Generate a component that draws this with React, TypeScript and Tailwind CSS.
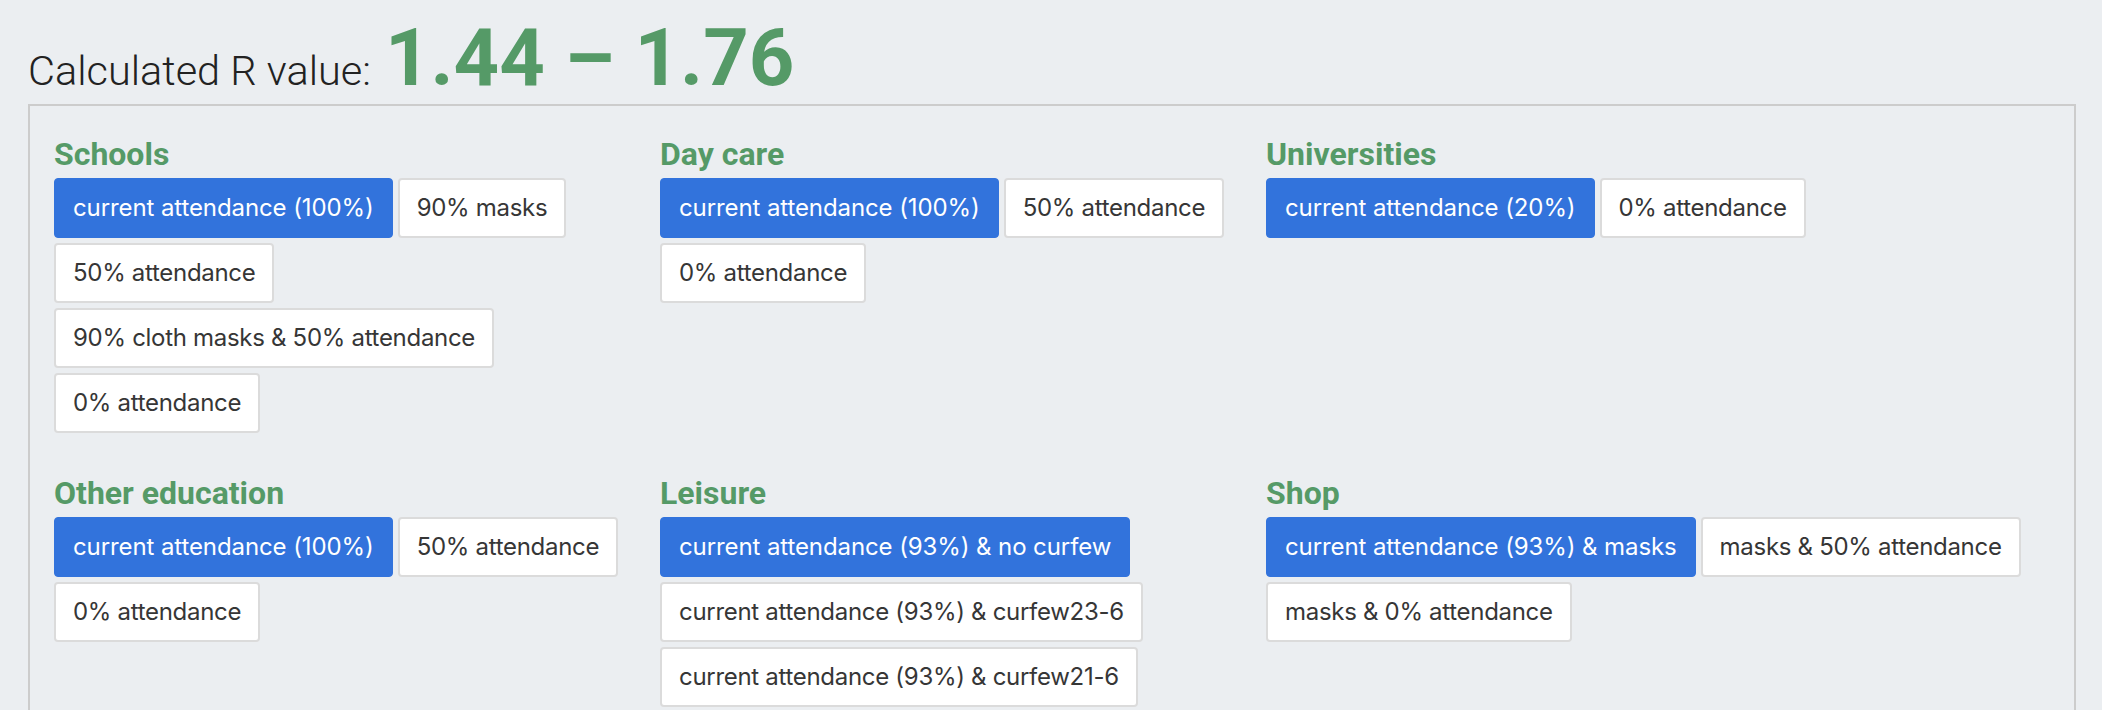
import React from "react";

type Section = { title: string; options: string[]; active: number };

const sections: Section[] = [
  {
    title: "Schools",
    options: [
      "current attendance (100%)",
      "90% masks",
      "50% attendance",
      "90% cloth masks & 50% attendance",
      "0% attendance",
    ],
    active: 0,
  },
  {
    title: "Day care",
    options: ["current attendance (100%)", "50% attendance", "0% attendance"],
    active: 0,
  },
  {
    title: "Universities",
    options: ["current attendance (20%)", "0% attendance"],
    active: 0,
  },
  {
    title: "Other education",
    options: ["current attendance (100%)", "50% attendance", "0% attendance"],
    active: 0,
  },
  {
    title: "Leisure",
    options: [
      "current attendance (93%) & no curfew",
      "current attendance (93%) & curfew23-6",
      "current attendance (93%) & curfew21-6",
    ],
    active: 0,
  },
  {
    title: "Shop",
    options: [
      "current attendance (93%) & masks",
      "masks & 50% attendance",
      "masks & 0% attendance",
    ],
    active: 0,
  },
];

function SectionBlock({ s }: { s: Section }) {
  return (
    <div className="flex flex-col">
      <h3 className="font-['Roboto',sans-serif] font-bold text-[32px] leading-[37px] text-[#559a67]">
        {s.title}
      </h3>
      <div className="mt-[5px] flex flex-wrap items-start gap-x-[5px] gap-y-[5px]">
        {s.options.map((o, i) => (
          <button
            key={o}
            className={
              i === s.active
                ? "h-[60px] flex items-center px-[18px] rounded-[4px] border border-[#3273dc] bg-[#3273dc] text-white font-['Inter',sans-serif] text-[24px] tracking-[-0.1px] whitespace-nowrap"
                : "h-[60px] flex items-center px-[17px] rounded-[4px] border-2 border-[#dbdbdb] bg-white text-[#363636] font-['Inter',sans-serif] text-[24px] tracking-[-0.3px] whitespace-nowrap"
            }
          >
            {o}
          </button>
        ))}
      </div>
    </div>
  );
}

export default function App() {
  return (
    <div className="min-h-screen bg-[#ebeef1] pl-[28px] pr-[26px] pt-[18px] pb-[40px]">
      <div className="flex items-baseline leading-none h-[81px]">
        <span className="font-['Roboto',sans-serif] font-light text-[41.5px] text-[#222]">
          Calculated R value:
        </span>
        <span className="ml-[14px] font-['Roboto',sans-serif] font-bold text-[79.5px] text-[#559a67]">
          1.44 – 1.76
        </span>
      </div>
      <div className="mt-[5px] border-2 border-[#cccccc] pl-[24px] pr-[24px] pt-[30px] pb-[40px]">
        <div className="grid grid-cols-[606px_606px_1fr] gap-y-[42px]">
          {sections.map((s) => (
            <SectionBlock key={s.title} s={s} />
          ))}
        </div>
      </div>
    </div>
  );
}
